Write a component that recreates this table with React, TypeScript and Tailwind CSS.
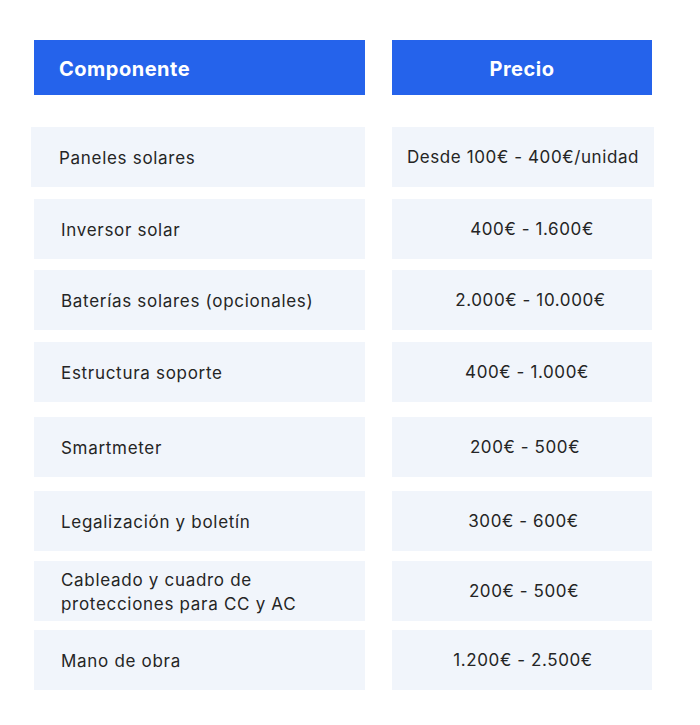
import React from "react";

const rows: { name: React.ReactNode; price: string; mt: string; shift: string; first?: boolean }[] = [
  { name: "Paneles solares", price: "Desde 100€ - 400€/unidad", mt: "mt-[32px]", shift: "", first: true },
  { name: "Inversor solar", price: "400€ - 1.600€", mt: "mt-[12px]", shift: "pl-[20px]" },
  { name: "Baterías solares (opcionales)", price: "2.000€ - 10.000€", mt: "mt-[11px]", shift: "pl-[17px]" },
  { name: "Estructura soporte", price: "400€ - 1.000€", mt: "mt-[12px]", shift: "pl-[10px]" },
  { name: "Smartmeter", price: "200€ - 500€", mt: "mt-[15px]", shift: "pl-[6px]" },
  { name: "Legalización y boletín", price: "300€ - 600€", mt: "mt-[14px]", shift: "pl-[3px]" },
  {
    name: (
      <>
        Cableado y cuadro de
        <br />
        protecciones para CC y AC
      </>
    ),
    price: "200€ - 500€",
    mt: "mt-[10px]",
    shift: "pl-[4px]",
  },
  { name: "Mano de obra", price: "1.200€ - 2.500€", mt: "mt-[9px]", shift: "pl-[2px]" },
];

export default function App() {
  return (
    <div
      className="w-[700px] h-[725px] bg-white pt-[40px] pl-[34px]"
      style={{ fontFamily: "Inter, 'Noto Sans', sans-serif" }}
    >
      <div className="flex gap-[27px]">
        <div className="w-[331px] h-[55px] bg-[#2563eb] flex items-center pl-[25px] pt-[3px] text-white font-bold text-[20px] tracking-[0.5px]">
          Componente
        </div>
        <div className="w-[260px] h-[55px] bg-[#2563eb] flex items-center justify-center pt-[3px] text-white font-bold text-[20px] tracking-[0.5px]">
          Precio
        </div>
      </div>
      {rows.map((r, i) => (
        <div key={i} className={`flex gap-[27px] ${r.mt}`}>
          <div
            className={`h-[60px] bg-[#f1f5fb] flex items-center pt-[2px] text-[17px] leading-[24px] tracking-[0.7px] text-[#252525] ${
              r.first ? "w-[334px] -ml-[3px] pl-[28px]" : "w-[331px] pl-[27px]"
            }`}
          >
            <span>{r.name}</span>
          </div>
          <div
            className={`h-[60px] bg-[#f1f5fb] flex items-center justify-center pt-[2px] text-[17px] tracking-[0.6px] text-[#252525] ${
              r.first ? "w-[262px]" : "w-[260px]"
            } ${r.shift}`}
          >
            {r.price}
          </div>
        </div>
      ))}
    </div>
  );
}
